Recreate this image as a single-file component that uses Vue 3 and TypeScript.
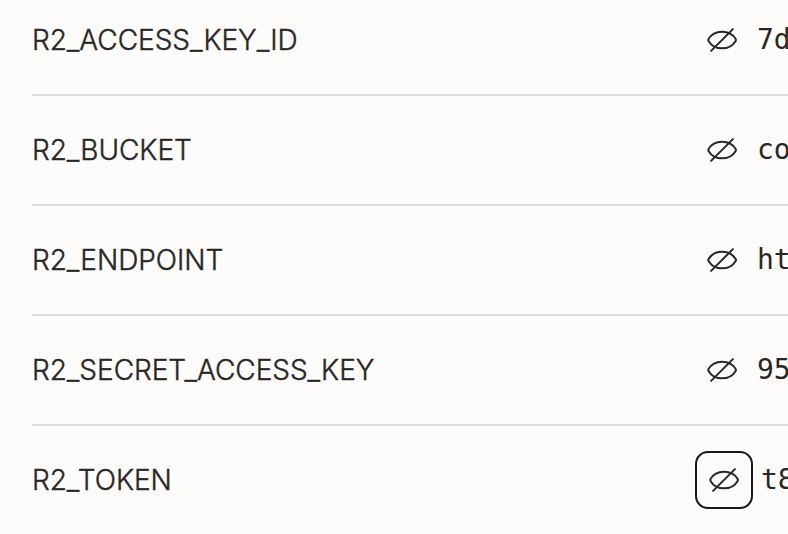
<script setup lang="ts">
interface Secret {
  name: string
  value: string
  focused?: boolean
}

const secrets: Secret[] = [
  { name: 'R2_ACCESS_KEY_ID', value: '7d' },
  { name: 'R2_BUCKET', value: 'co' },
  { name: 'R2_ENDPOINT', value: 'ht' },
  { name: 'R2_SECRET_ACCESS_KEY', value: '95' },
  { name: 'R2_TOKEN', value: 't8', focused: true },
]
</script>

<template>
  <main class="secrets">
    <div v-for="secret in secrets" :key="secret.name" class="row">
      <span class="name">{{ secret.name }}</span>
      <div class="cell" :class="{ focused: secret.focused }">
        <button class="toggle" type="button" aria-pressed="false">
          <svg class="eye" viewBox="0 0 32 32" aria-hidden="true">
            <path d="M2.5 15.1C5.1 10.7 10 7.8 16 7.8S27.1 10.7 29.7 15.1Q30.3 16 29.7 16.9C27.1 21.3 22 24.3 16 24.3S5.1 21.3 2.5 16.9Q1.9 16 2.5 15.1Z" />
            <path d="M5.1 26.9 26.9 5.1" />
          </svg>
        </button>
        <span class="value">{{ secret.value }}</span>
      </div>
    </div>
  </main>
</template>

<style>
body {
  background: #fdfcfb;
}
</style>

<style scoped>
.secrets {
  box-sizing: border-box;
  height: 534px;
  padding-left: 32px;
  overflow: hidden;
  background: #fdfcfb;
  color: #282725;
}

.row {
  box-sizing: border-box;
  display: flex;
  align-items: center;
  height: 110px;
  border-bottom: 2px solid #dddcdb;
}

.row:first-child {
  align-items: flex-end;
  height: 96px;
  padding-bottom: 25px;
}

.row:last-child {
  border-bottom-color: transparent;
}

.name {
  flex: 1;
  font: 300 28px/58px Inter, sans-serif;
  letter-spacing: -0.04px;
  -webkit-text-stroke: 0.4px currentColor;
}

.cell {
  display: flex;
  align-items: center;
  flex: none;
  width: 82px;
  height: 58px;
}

.cell.focused {
  width: 93px;
  gap: 8px;
}

.toggle {
  box-sizing: border-box;
  display: flex;
  align-items: center;
  justify-content: center;
  flex: none;
  width: 51px;
  height: 58px;
  padding: 0 19px 0 0;
  border: 0;
  background: none;
  color: inherit;
}

.focused .toggle {
  width: 58px;
  padding: 0;
  border: 2px solid #191817;
  border-radius: 13px;
}

.eye {
  flex: none;
  width: 32px;
  height: 32px;
  fill: none;
  stroke: currentColor;
  stroke-width: 2;
  stroke-linecap: round;
  stroke-linejoin: round;
}

.value {
  font: 28px/58px "DejaVu Sans Mono", monospace;
  white-space: nowrap;
}
</style>
